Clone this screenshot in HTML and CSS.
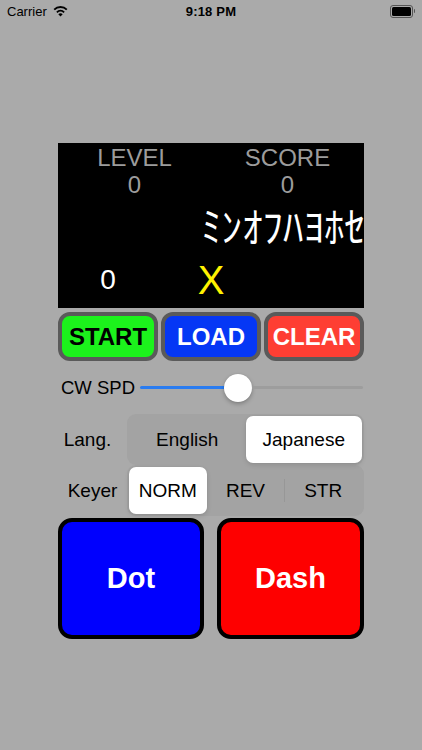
FILE: index.html
```html
<!DOCTYPE html>
<html>
<head>
<meta charset="utf-8">
<link rel="stylesheet" href="styles.css">
</head>
<body>
<div class="status">
  <div class="st-left">
    <span>Carrier</span>
    <svg class="wifi" width="15" height="11" viewBox="0 0 15 11">
      <path d="M7.5 10.6 L5.3 8.3 A3.1 3.1 0 0 1 9.7 8.3 Z" fill="#000"/>
      <path d="M3.9 6.3 A5.1 5.1 0 0 1 11.1 6.3" stroke="#000" stroke-width="1.9" fill="none"/>
      <path d="M1.2 3.6 A8.9 8.9 0 0 1 13.8 3.6" stroke="#000" stroke-width="1.9" fill="none"/>
    </svg>
  </div>
  <div class="st-time">9:18 PM</div>
  <div class="st-right">
    <div class="battery"><div class="batt-fill"></div></div>
    <div class="batt-nub"></div>
  </div>
</div>

<div class="main">
  <div class="panel">
    <div class="heads">
      <div class="head">LEVEL<br>0</div>
      <div class="head">SCORE<br>0</div>
    </div>
    <div class="kana">ﾐﾝｵﾌﾊﾖﾎｾ</div>
    <div class="bottom">
      <span class="zero">0</span>
      <span class="ex">X</span>
    </div>
  </div>

  <div class="btnrow">
    <div class="btn start">START</div>
    <div class="btn load">LOAD</div>
    <div class="btn clear">CLEAR</div>
  </div>

  <div class="sliderrow">
    <span class="slabel">CW SPD</span>
    <div class="track">
      <div class="track-fill"></div>
      <div class="thumb"></div>
      <div class="track-rest"></div>
    </div>
  </div>

  <div class="segrow">
    <span class="rowlabel lang">Lang.</span>
    <div class="seg two">
      <div class="segitem">English</div>
      <div class="segitem on">Japanese</div>
    </div>
  </div>
  <div class="segrow">
    <span class="rowlabel">Keyer</span>
    <div class="seg three">
      <div class="segitem on">NORM</div>
      <div class="segitem">REV</div>
      <div class="segitem sep">STR</div>
    </div>
  </div>

  <div class="pads">
    <div class="pad dot">Dot</div>
    <div class="pad dash">Dash</div>
  </div>
</div>
</body>
</html>
```

FILE: styles.css
```css
html, body {
  margin: 0;
  padding: 0;
  background: #aaaaaa;
  font-family: "Liberation Sans", Arial, sans-serif;
  width: 422px;
  height: 750px;
  overflow: hidden;
}

.status {
  height: 23px;
  display: flex;
  align-items: center;
  justify-content: space-between;
  padding: 0 7px 0 7px;
  font-size: 13px;
  color: #000;
  position: relative;
}
.st-left {
  display: flex;
  align-items: center;
  gap: 6px;
  width: 120px;
}
.wifi { margin-top: -1px; }
.st-time {
  font-weight: bold;
  font-size: 13px;
  letter-spacing: 0.2px;
}
.st-right {
  width: 120px;
  display: flex;
  justify-content: flex-end;
  align-items: center;
  margin-top: -1px;
}
.battery {
  width: 19px;
  height: 9px;
  border: 1px solid #555;
  border-radius: 3px;
  padding: 1px;
  box-sizing: content-box;
}
.batt-fill {
  width: 100%;
  height: 100%;
  background: #000;
  border-radius: 1.5px;
}
.batt-nub {
  width: 1.5px;
  height: 4px;
  background: #555;
  border-radius: 0 1px 1px 0;
  margin-left: 1px;
}

.main {
  width: 306px;
  margin: 120px 0 0 58px;
}

.panel {
  height: 165px;
  background: #000;
  overflow: hidden;
}
.heads {
  display: grid;
  grid-template-columns: 153px 153px;
  padding-top: 1px;
}
.head {
  text-align: center;
  color: #9c9c9c;
  font-size: 24px;
  line-height: 27px;
}
.kana {
  margin-top: 6px;
  padding-left: 143px;
  color: #fff;
  font-family: "Noto Sans CJK JP", sans-serif;
  font-size: 41px;
  line-height: 40px;
  height: 40px;
  white-space: nowrap;
}
.bottom {
  display: flex;
  margin-top: 14px;
  height: 44px;
  align-items: center;
}
.zero {
  width: 100px;
  text-align: center;
  color: #fff;
  font-size: 28px;
}
.ex {
  width: 106px;
  text-align: center;
  color: #fff200;
  font-size: 40px;
}

.btnrow {
  margin-top: 4px;
  display: grid;
  grid-template-columns: 100px 100px 100px;
  gap: 3px;
  height: 49px;
}
.btn {
  border: 4px solid #5a5a5a;
  border-radius: 12px;
  display: flex;
  align-items: center;
  justify-content: center;
  font-weight: bold;
  font-size: 24px;
  color: #fff;
}
.start { background: #1cf21c; color: #000; }
.load { background: #0537f5; }
.clear { background: #fe3e33; }

.sliderrow {
  height: 53px;
  display: flex;
  align-items: center;
  padding-left: 3px;
}
.slabel {
  font-size: 18.5px;
  color: #000;
  width: 79px;
}
.track {
  flex: 1;
  display: flex;
  align-items: center;
  margin-right: 1px;
  height: 30px;
}
.track-fill {
  width: 84px;
  height: 3px;
  background: #2a7cf0;
  border-radius: 2px 0 0 2px;
}
.thumb {
  width: 28px;
  height: 28px;
  border-radius: 50%;
  background: #fff;
  box-shadow: 0 2px 4px rgba(0,0,0,0.25), 0 0 1px rgba(0,0,0,0.2);
}
.track-rest {
  flex: 1;
  height: 3px;
  background: #9d9d9d;
  border-radius: 0 2px 2px 0;
}

.segrow {
  display: flex;
  height: 51px;
  align-items: center;
}
.rowlabel {
  width: 69px;
  text-align: center;
  font-size: 19px;
  color: #000;
}
.rowlabel.lang {
  padding-right: 10px;
  width: 59px;
}
.seg {
  flex: 1;
  height: 51px;
  box-sizing: border-box;
  background: #a3a3a3;
  border-radius: 9px;
  padding: 2px;
  display: grid;
}
.seg.two { grid-template-columns: 1fr 1fr; }
.seg.three { grid-template-columns: 1fr 1fr 1fr; }
.segitem {
  display: flex;
  align-items: center;
  justify-content: center;
  font-size: 19px;
  color: #000;
  border-radius: 7px;
  position: relative;
}
.segitem.on {
  background: #fff;
  box-shadow: 0 2px 5px rgba(0,0,0,0.12), 0 0 1px rgba(0,0,0,0.1);
}
.segitem.sep::before {
  content: "";
  position: absolute;
  left: 0;
  top: 12px;
  bottom: 12px;
  width: 1px;
  background: #979797;
}

.pads {
  margin-top: 2px;
  display: grid;
  grid-template-columns: 146px 147px;
  gap: 13px;
  height: 121px;
}
.pad {
  border: 4px solid #000;
  border-radius: 14px;
  display: flex;
  align-items: center;
  justify-content: center;
  font-weight: bold;
  font-size: 29px;
  color: #fff;
}
.dot { background: #0000fe; }
.dash { background: #fe0000; }
```
